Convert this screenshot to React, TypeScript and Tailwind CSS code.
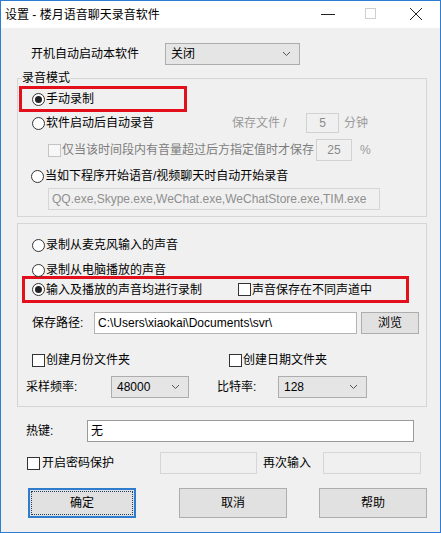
import React from 'react';

const FONT = "font-['Liberation_Sans','Noto_Sans_CJK_SC',sans-serif]";

const Radio = ({ checked = false }: { checked?: boolean }) => (
  <span className="w-[13px] h-[13px] shrink-0 rounded-full border border-[#333333] bg-white flex items-center justify-center">
    {checked && <span className="w-[7px] h-[7px] rounded-full bg-[#222222]" />}
  </span>
);

const Checkbox = ({ disabled = false }: { disabled?: boolean }) => (
  <span
    className={
      disabled
        ? 'w-[13px] h-[13px] shrink-0 border border-[#c4c4c4] bg-[#f7f7f7]'
        : 'w-[13px] h-[13px] shrink-0 border border-[#333333] bg-white'
    }
  />
);

const Chevron = () => (
  <svg width="9" height="6" viewBox="0 0 9 6" className="shrink-0">
    <polyline points="1,1 4.5,4.5 8,1" fill="none" stroke="#555555" strokeWidth="1" />
  </svg>
);

const Select = ({ value, className }: { value: string; className: string }) => (
  <div className={`${className} h-[22px] border border-[#adadad] bg-[#e5e5e5] flex items-center justify-between pl-[5px] pr-[8px]`}>
    <span>{value}</span>
    <Chevron />
  </div>
);

const Button = ({ label, focused = false }: { label: string; focused?: boolean }) => (
  <div
    className={
      focused
        ? 'relative w-[108px] h-[30px] border-2 border-[#2f7bcf] bg-[#e1e1e1] flex items-center justify-center'
        : 'relative w-[108px] h-[30px] border border-[#adadad] bg-[#e1e1e1] flex items-center justify-center'
    }
  >
    {focused && <span className="absolute inset-[1px] border border-dotted border-[#1d3f66]" />}
    <span>{label}</span>
  </div>
);

export default function App() {
  return (
    <div className={`${FONT} text-[12px] leading-[16px] text-black w-[441px] h-[533px] border border-[#2d7dd2] flex flex-col bg-[#f0f0f0]`}>
      {/* title bar */}
      <div className="h-[27px] bg-white flex items-center pl-[4px]">
        <span className="flex-1">设置 - 楼月语音聊天录音软件</span>
        <svg width="120" height="27" viewBox="0 0 120 27" className="shrink-0">
          <line x1="1" y1="13.5" x2="15" y2="13.5" stroke="#222222" strokeWidth="1" />
          <rect x="45.5" y="7.5" width="10" height="10" fill="none" stroke="#cfcfcf" strokeWidth="1" />
          <line x1="90" y1="7" x2="102" y2="19" stroke="#222222" strokeWidth="1" />
          <line x1="102" y1="7" x2="90" y2="19" stroke="#222222" strokeWidth="1" />
        </svg>
      </div>

      {/* auto start */}
      <div className="mt-[15px] h-[22px] flex items-center pl-[30px]">
        <span className="w-[134px]">开机自动启动本软件</span>
        <Select value="关闭" className="w-[135px]" />
      </div>

      {/* recording mode */}
      <fieldset className="mt-[5px] ml-[16px] w-[410px] border border-[#d6d6d6] p-0 pb-[6px] m-0">
        <legend className="ml-[4px] px-0 leading-[16px]">录音模式</legend>

        <div className="ml-[1px] w-[168px] h-[26px] border-[3px] border-[#e3101c] flex items-center pl-[10px]">
          <Radio checked />
          <span className="ml-[1px]">手动录制</span>
        </div>

        <div className="mt-[1px] h-[20px] flex items-center pl-[14px]">
          <Radio />
          <span className="ml-[1px] w-[186px]">软件启动后自动录音</span>
          <span className="w-[74px] text-[#9a9a9a]">保存文件 /</span>
          <div className="w-[33px] h-[20px] border border-[#d2d2d2] flex items-center justify-center text-[#8a8a8a]">5</div>
          <span className="ml-[5px] text-[#9a9a9a]">分钟</span>
        </div>

        <div className="mt-[6px] h-[22px] flex items-center pl-[30px]">
          <Checkbox disabled />
          <span className="ml-[1px] w-[254px] text-[#7d7d7d]">仅当该时间段内有音量超过后方指定值时才保存</span>
          <div className="w-[36px] h-[22px] border border-[#d2d2d2] flex items-center justify-center text-[#8a8a8a]">25</div>
          <span className="ml-[8px] text-[#9a9a9a]">%</span>
        </div>

        <div className="mt-[5px] h-[20px] flex items-center pl-[13px]">
          <Radio />
          <span className="ml-[1px]">当如下程序开始语音/视频聊天时自动开始录音</span>
        </div>

        <div className="mt-[2px] ml-[30px] w-[332px] h-[22px] border border-[#d6d6d6] bg-[#f0f0f0] flex items-center pl-[3px] text-[#8f8f8f] whitespace-nowrap overflow-hidden">
          QQ.exe,Skype.exe,WeChat.exe,WeChatStore.exe,TIM.exe
        </div>
      </fieldset>

      {/* source / output */}
      <div className="mt-[6px] ml-[16px] w-[410px] border border-[#d6d6d6] pb-[8px]">
        <div className="mt-[15px] h-[12px] flex items-center pl-[14px]">
          <Radio />
          <span className="ml-[1px]">录制从麦克风输入的声音</span>
        </div>
        <div className="mt-[13px] h-[12px] flex items-center pl-[14px]">
          <Radio />
          <span className="ml-[1px]">录制从电脑播放的声音</span>
        </div>

        <div className="ml-[4px] w-[387px] h-[27px] border-[3px] border-[#e3101c] flex items-center pl-[7px]">
          <Radio checked />
          <span className="ml-[1px] w-[192px]">输入及播放的声音均进行录制</span>
          <Checkbox />
          <span className="ml-[1px]">声音保存在不同声道中</span>
        </div>

        <div className="mt-[9px] h-[22px] flex items-center pl-[14px]">
          <span className="w-[62px]">保存路径:</span>
          <div className="w-[263px] h-[22px] border border-[#b4b4b4] bg-white flex items-center pl-[3px]">
            C:\Users\xiaokai\Documents\svr\
          </div>
          <div className="ml-[4px] w-[58px] h-[22px] border border-[#adadad] bg-[#e1e1e1] flex items-center justify-center">
            浏览
          </div>
        </div>

        <div className="mt-[20px] h-[12px] flex items-center pl-[14px]">
          <Checkbox />
          <span className="ml-[1px] w-[183px]">创建月份文件夹</span>
          <Checkbox />
          <span className="ml-[1px]">创建日期文件夹</span>
        </div>

        <div className="mt-[10px] h-[22px] flex items-center pl-[8px]">
          <span className="w-[85px]">采样频率:</span>
          <Select value="48000" className="w-[78px]" />
          <span className="ml-[28px] w-[61px]">比特率:</span>
          <Select value="128" className="w-[89px]" />
        </div>
      </div>

      {/* hotkey */}
      <div className="mt-[13px] h-[22px] flex items-center pl-[25px]">
        <span className="w-[61px]">热键:</span>
        <div className="w-[327px] h-[22px] border border-[#9a9a9a] bg-white flex items-center pl-[3px]">无</div>
      </div>

      {/* password */}
      <div className="mt-[10px] h-[22px] flex items-center pl-[26px]">
        <Checkbox />
        <span className="ml-[2px] w-[118px]">开启密码保护</span>
        <div className="w-[97px] h-[22px] border border-[#d6d6d6] bg-[#f0f0f0]" />
        <span className="ml-[6px] w-[60px]">再次输入</span>
        <div className="w-[98px] h-[22px] border border-[#d6d6d6] bg-[#f0f0f0]" />
      </div>

      {/* buttons */}
      <div className="mt-[14px] h-[30px] flex items-center pl-[27px]">
        <Button label="确定" focused />
        <div className="ml-[43px]">
          <Button label="取消" />
        </div>
        <div className="ml-[32px]">
          <Button label="帮助" />
        </div>
      </div>
    </div>
  );
}
